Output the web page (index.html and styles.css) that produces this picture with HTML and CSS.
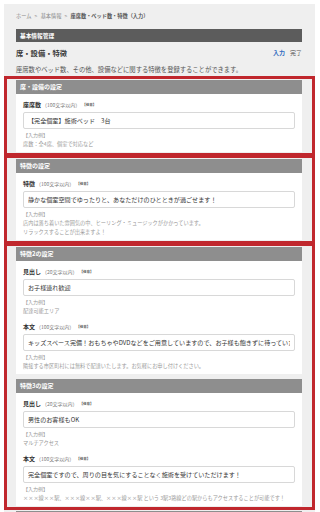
FILE: index.html
```html
<!DOCTYPE html>
<html lang="ja">
<head>
<meta charset="utf-8">
<title>座席数・ベッド数・特徴（入力）</title>
<link rel="stylesheet" href="styles.css">
</head>
<body>
<div class="page">
  <div class="crumbs">ホーム <span class="sep">&gt;</span> 基本情報 <span class="sep">&gt;</span> <b>座席数・ベッド数・特徴（入力）</b></div>
  <div class="bar">基本情報管理</div>
  <div class="title-row">
    <h1 class="title">席・設備・特徴</h1>
    <div class="steps"><span class="step-on">入力</span><span class="step">完了</span></div>
  </div>
  <p class="desc">座席数やベッド数、その他、設備などに関する特徴を登録することができます。</p>

  <div class="mark">
    <div class="card">
      <div class="card-head">席・設備の設定</div>
      <div class="card-body">
        <div class="field">
          <div class="label"><b>座席数</b><span class="limit">（100文字以内）</span><span class="opt">【任意】</span></div>
          <input class="input" type="text" value="【完全個室】施術ベッド　3台">
          <div class="ex-h">【入力例】</div>
          <div class="ex">席数：全4席、個室で対応など</div>
        </div>
      </div>
    </div>
  </div>

  <div class="mark next">
    <div class="card">
      <div class="card-head">特徴の設定</div>
      <div class="card-body">
        <div class="field">
          <div class="label"><b>特徴</b><span class="limit">（100文字以内）</span><span class="opt">【任意】</span></div>
          <input class="input" type="text" value="静かな個室空間でゆったりと、あなただけのひとときが過ごせます！">
          <div class="ex-h">【入力例】</div>
          <div class="ex">店内は落ち着いた雰囲気の中、ヒーリング・ミュージックがかかっています。</div>
          <div class="ex">リラックスすることが出来ますよ！</div>
        </div>
      </div>
    </div>
  </div>

  <div class="mark next">
    <div class="card">
      <div class="card-head">特徴2の設定</div>
      <div class="card-body">
        <div class="field">
          <div class="label"><b>見出し</b><span class="limit">（20文字以内）</span><span class="opt">【任意】</span></div>
          <input class="input" type="text" value="お子様連れ歓迎">
          <div class="ex-h">【入力例】</div>
          <div class="ex">配達可能エリア</div>
        </div>
        <div class="field">
          <div class="label"><b>本文</b><span class="limit">（100文字以内）</span><span class="opt">【任意】</span></div>
          <input class="input" type="text" value="キッズスペース完備！おもちゃやDVDなどをご用意していますので、お子様も飽きずに待っていただけます。">
          <div class="ex-h">【入力例】</div>
          <div class="ex">隣接する市区町村には無料で配達いたします。お気軽にお申し付けください。</div>
        </div>
      </div>
    </div>
    <div class="card gap">
      <div class="card-head">特徴3の設定</div>
      <div class="card-body">
        <div class="field">
          <div class="label"><b>見出し</b><span class="limit">（20文字以内）</span><span class="opt">【任意】</span></div>
          <input class="input" type="text" value="男性のお客様もOK">
          <div class="ex-h">【入力例】</div>
          <div class="ex">マルチアクセス</div>
        </div>
        <div class="field">
          <div class="label"><b>本文</b><span class="limit">（100文字以内）</span><span class="opt">【任意】</span></div>
          <input class="input" type="text" value="完全個室ですので、周りの目を気にすることなく施術を受けていただけます！">
          <div class="ex-h">【入力例】</div>
          <div class="ex">×××線××駅、×××線××駅、×××線××駅 という 3駅3路線どの駅からもアクセスすることが可能です！</div>
        </div>
      </div>
    </div>
  </div>

  <div class="rest">
    <div class="card-head">特徴4の設定</div>
  </div>
</div>
</body>
</html>
```

FILE: styles.css
```css
html, body {
  margin: 0;
  padding: 0;
  background: #ffffff;
  overflow: hidden;
}
body {
  font-family: "Noto Sans CJK JP", "Noto Sans", sans-serif;
  color: #333333;
}
.page {
  margin: 4px 5px 0 4px;
  background: #efefef;
  padding-top: 8px;
  min-height: 600px;
}
.crumbs {
  font-size: 5.2px;
  line-height: 8px;
  height: 8px;
  color: #8a8a8a;
  padding: 0 13px 0 12px;
  white-space: nowrap;
}
.crumbs b {
  color: #555555;
  font-weight: bold;
}
.crumbs .sep {
  margin: 0 2px;
}
.bar {
  margin: 9px 13px 0 12px;
  height: 13px;
  line-height: 13px;
  background: #5c5c5c;
  color: #ffffff;
  font-size: 5.7px;
  font-weight: bold;
  padding-left: 4px;
}
.title-row {
  margin: 6px 13px 0 12px;
  height: 10px;
  display: flex;
  align-items: center;
  justify-content: space-between;
}
.title {
  margin: 0;
  font-size: 7.3px;
  line-height: 10px;
  font-weight: bold;
  color: #3a3a3a;
}
.steps {
  display: flex;
  gap: 5px;
  font-size: 6px;
  line-height: 10px;
}
.step-on {
  color: #2f6cc0;
  font-weight: bold;
}
.step {
  color: #555555;
}
.desc {
  margin: 8px 13px 0 12px;
  font-size: 6.3px;
  line-height: 8px;
  color: #555555;
  white-space: nowrap;
}
.mark {
  margin-top: 2px;
  border: 3px solid #c0272d;
  padding: 1px 10px 1px 9px;
}
.mark.next {
  margin-top: -1px;
}
.rest {
  padding: 1px 13px 0 12px;
}
.card {
  background: #ffffff;
}
.card.gap {
  margin-top: 5px;
}
.card-head {
  height: 14px;
  line-height: 14px;
  background: #8e8e8e;
  color: #ffffff;
  font-size: 6px;
  font-weight: bold;
  padding-left: 4px;
}
.card-body {
  padding: 7px 7px 4px 7px;
}
.field + .field {
  margin-top: 8px;
}
.label {
  height: 8px;
  line-height: 8px;
  font-size: 6px;
  white-space: nowrap;
  display: flex;
  align-items: center;
}
.label b {
  font-weight: bold;
  color: #333333;
}
.limit {
  font-size: 5px;
  color: #777777;
  margin-left: 1px;
}
.opt {
  font-size: 3.5px;
  color: #555555;
  font-weight: bold;
  margin-left: 2px;
}
.input {
  display: block;
  box-sizing: border-box;
  width: 100%;
  height: 17px;
  margin: 3px 0 0 0;
  padding: 0 4px;
  border: 1px solid #d8d8d8;
  border-radius: 2px;
  background: #ffffff;
  font-family: "Noto Sans CJK JP", "Noto Sans", sans-serif;
  font-size: 6.1px;
  color: #333333;
  outline: none;
}
.ex-h {
  margin-top: 2px;
  font-size: 5px;
  line-height: 8px;
  color: #999999;
}
.ex {
  font-size: 5.2px;
  line-height: 9px;
  color: #999999;
  white-space: nowrap;
}
```
